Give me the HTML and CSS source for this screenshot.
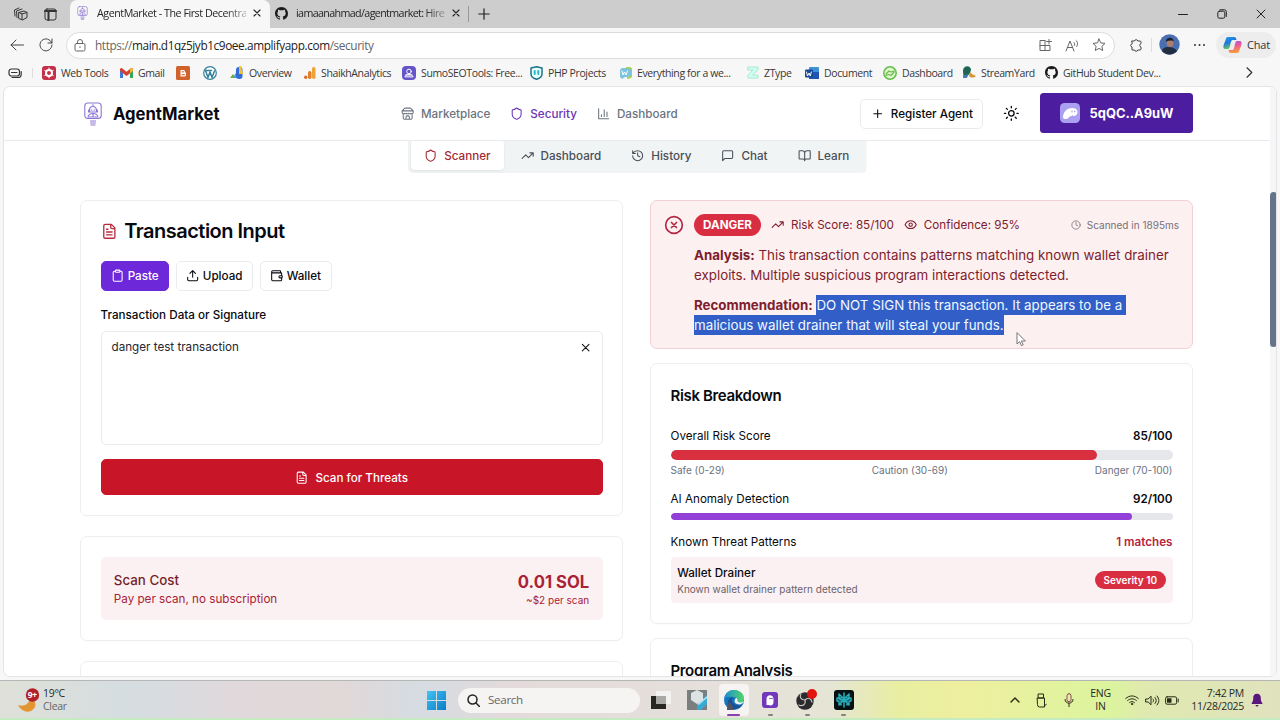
FILE: index.html
```
<!DOCTYPE html>
<html lang="en">

<head>
    <meta charset="UTF-8">
    <meta name="viewport" content="width=device-width, initial-scale=1.0">
    <title>AgentMarket - The First Decentralized Agent Marketplace</title>
    <link rel="stylesheet" href="styles.css">
</head>

<body>

    <!-- Shared icons -->
    <svg class="sprite" xmlns="http://www.w3.org/2000/svg">
        <symbol id="shield" viewBox="0 0 24 24"><path d="M20 13c0 5-3.500 7.500-7.660 8.950a1 1 0 0 1-.67-.01C7.500 20.500 4 18 4 13V6a1 1 0 0 1 1-1c2 0 4.500-1.200 6.240-2.720a1.170 1.170 0 0 1 1.520 0C14.510 3.810 17 5 19 5a1 1 0 0 1 1 1z"/></symbol>
        <symbol id="store" viewBox="0 0 24 24"><path d="m2 7 4.410-4.410A2 2 0 0 1 7.830 2h8.340a2 2 0 0 1 1.420.59L22 7M4 12v8a2 2 0 0 0 2 2h12a2 2 0 0 0 2-2v-8M15 22v-4a2 2 0 0 0-2-2h-2a2 2 0 0 0-2 2v4M2 7h20v3a2 2 0 0 1-2 2 2.700 2.700 0 0 1-2.600-.6 2.700 2.700 0 0 1-3.400 0 2.700 2.700 0 0 1-4 0 2.700 2.700 0 0 1-3.400 0A2.700 2.700 0 0 1 4 12a2 2 0 0 1-2-2z"/></symbol>
        <symbol id="chart" viewBox="0 0 24 24"><path d="M3 3v18h18M18 17V9M13 17V5M8 17v-3"/></symbol>
        <symbol id="plus" viewBox="0 0 24 24"><path d="M5 12h14M12 5v14"/></symbol>
        <symbol id="sun" viewBox="0 0 24 24"><circle cx="12" cy="12" r="4"/><path d="M12 2v2M12 20v2M4.900 4.900l1.400 1.400M17.700 17.700l1.400 1.400M2 12h2M20 12h2M6.300 17.700l-1.400 1.400M19.100 4.900l-1.400 1.400"/></symbol>
        <symbol id="trend" viewBox="0 0 24 24"><path d="M22 7 13.500 15.500 8.500 10.500 2 17M16 7h6v6"/></symbol>
        <symbol id="history" viewBox="0 0 24 24"><path d="M3 12a9 9 0 1 0 9-9 9.750 9.750 0 0 0-6.740 2.740L3 8M3 3v5h5M12 7v5l4 2"/></symbol>
        <symbol id="message" viewBox="0 0 24 24"><path d="M21 15a2 2 0 0 1-2 2H7l-4 4V5a2 2 0 0 1 2-2h14a2 2 0 0 1 2 2z"/></symbol>
        <symbol id="book" viewBox="0 0 24 24"><path d="M12 7v14M3 18a1 1 0 0 1-1-1V4a1 1 0 0 1 1-1h5a4 4 0 0 1 4 4 4 4 0 0 1 4-4h5a1 1 0 0 1 1 1v13a1 1 0 0 1-1 1h-6a3 3 0 0 0-3 3 3 3 0 0 0-3-3z"/></symbol>
        <symbol id="file" viewBox="0 0 24 24"><path d="M15 2H6a2 2 0 0 0-2 2v16a2 2 0 0 0 2 2h12a2 2 0 0 0 2-2V7zM14 2v4a2 2 0 0 0 2 2h4M10 9H8M16 13H8M16 17H8"/></symbol>
        <symbol id="clipboard" viewBox="0 0 24 24"><rect x="8" y="2" width="8" height="4" rx="1"/><path d="M16 4h2a2 2 0 0 1 2 2v14a2 2 0 0 1-2 2H6a2 2 0 0 1-2-2V6a2 2 0 0 1 2-2h2"/></symbol>
        <symbol id="upload" viewBox="0 0 24 24"><path d="M21 15v4a2 2 0 0 1-2 2H5a2 2 0 0 1-2-2v-4M17 8l-5-5-5 5M12 3v12"/></symbol>
        <symbol id="wallet" viewBox="0 0 24 24"><path d="M19 7V4a1 1 0 0 0-1-1H5a2 2 0 0 0 0 4h15a1 1 0 0 1 1 1v4h-3a2 2 0 0 0 0 4h3a1 1 0 0 0 1-1v-2a1 1 0 0 0-1-1M3 5v14a2 2 0 0 0 2 2h15a1 1 0 0 0 1-1v-4"/></symbol>
        <symbol id="x" viewBox="0 0 24 24"><path d="M18 6 6 18M6 6l12 12"/></symbol>
        <symbol id="x-circle" viewBox="0 0 24 24"><circle cx="12" cy="12" r="10"/><path d="m15 9-6 6M9 9l6 6"/></symbol>
        <symbol id="eye" viewBox="0 0 24 24"><path d="M2 12s3.500-7 10-7 10 7 10 7-3.500 7-10 7-10-7-10-7z"/><circle cx="12" cy="12" r="3"/></symbol>
        <symbol id="clock" viewBox="0 0 24 24"><circle cx="12" cy="12" r="10"/><path d="M12 6v6l4 2"/></symbol>
        <symbol id="github" viewBox="0 0 16 16"><path d="M8 0C3.580 0 0 3.580 0 8c0 3.540 2.290 6.530 5.470 7.590.4.07.55-.17.55-.38v-1.490c-2.010.37-2.530-.49-2.690-.94-.09-.23-.48-.94-.82-1.130-.28-.15-.68-.52-.01-.53.63-.01 1.080.58 1.230.82.72 1.210 1.870.87 2.330.66.07-.52.28-.87.51-1.070-1.780-.2-3.640-.89-3.640-3.950 0-.87.31-1.590.82-2.150-.08-.2-.36-1.020.08-2.120 0 0 .67-.21 2.200.82a7.400 7.400 0 0 1 4 0c1.530-1.040 2.200-.82 2.200-.82.44 1.100.16 1.920.08 2.120.51.56.82 1.270.82 2.150 0 3.070-1.870 3.750-3.650 3.950.29.25.54.73.54 1.480v2.200c0 .21.15.46.55.38A8 8 0 0 0 16 8c0-4.420-3.580-8-8-8z"/></symbol>
        <symbol id="robot" viewBox="0 0 18 24"><rect x=".8" y="1" width="16.400" height="15.500" rx="3"/><path d="M9 2.500v2M5.500 8a3.500 3.500 0 0 1 7 0v2h-7zM4.500 8v2M13.500 8v2M7.200 8h.8M10 8h.8M4 15c.5-2.500 2-3.500 5-3.500s4.500 1 5 3.500zM9 12v3M6.500 19h5M6.500 21h5M7 23h4"/></symbol>
    </svg>

    <div class="desktop">

        <!-- Tab strip -->
        <div class="tabstrip">
            <div class="strip-tools">
                <svg width="15" height="15" viewBox="0 0 15 15"><path d="M6 5.500 11 4l3 1.500v5L9.500 13 6 11.500zM4 10.500 3.500 4 9 2M2 9 1.500 3 6 1M6 5.500l3 1.500 5-1.500M9 7v5.500"/></svg>
                <svg width="13" height="13" viewBox="0 0 13 13"><rect x="1" y="1" width="11" height="11" rx="2"/><path d="M1 3h11M4.500 4v8" stroke-width="2"/></svg>
            </div>
            <div class="tab active">
                <svg class="robot" width="11" height="14"><use href="#robot"/></svg>
                <span class="tab-title">AgentMarket - The First Decentra</span>
                <svg class="tab-close" width="12" height="12"><use href="#x"/></svg>
            </div>
            <div class="tab">
                <svg class="solid" width="13" height="13"><use href="#github"/></svg>
                <span class="tab-title">iamaanahmad/agentmarket: Hire</span>
                <svg class="tab-close" width="12" height="12"><use href="#x"/></svg>
            </div>
            <span class="tab-divider"></span>
            <svg class="new-tab" width="18" height="18"><use href="#plus"/></svg>
            <div class="window-buttons">
                <svg width="10" height="10" viewBox="0 0 10 10"><path d="M.5 5.500h9"/></svg>
                <svg width="10" height="10" viewBox="0 0 10 10"><rect x=".8" y="2.200" width="7" height="7" rx="1.500"/><path d="M3 .8h4.500a1.800 1.800 0 0 1 1.800 1.800V7.500"/></svg>
                <svg width="10" height="10" viewBox="0 0 10 10"><path d="m1 1 8 8M9 1 1 9"/></svg>
            </div>
        </div>

        <!-- Address bar -->
        <div class="toolbar">
            <svg width="14" height="12" viewBox="0 0 14 12"><path d="M13.500 6H1M6 1 1 6l5 5"/></svg>
            <svg width="14" height="14" viewBox="0 0 14 14"><path d="M12.700 5A6 6 0 1 0 13 7M13 1v4H9"/></svg>
            <div class="address">
                <svg width="12" height="13" viewBox="0 0 12 13"><rect x="1" y="4.500" width="10" height="7.500" rx="1.500"/><path d="M3.500 4.500V3a2.500 2.500 0 0 1 5 0v1.500M6 7.800v.8"/></svg>
                <span class="url">https://<b>main.d1qz5jyb1c9oee.amplifyapp.com</b>/security</span>
                <svg width="13" height="13" viewBox="0 0 13 13"><path d="M6 1.500H1v10h10v-5H1M6 1.500v10M10 0v5M7.500 2.500h5"/></svg>
                <svg width="14" height="13" viewBox="0 0 14 13"><path d="m1 12 4-10 4 10M2.500 8.500h5M9 3.500c1 .8 1 2 .3 3M11 1.500c2 1.500 2 4 .7 6"/></svg>
                <svg width="14" height="14" viewBox="0 0 14 14"><path d="m7 1 1.800 3.900 4.200.5-3.100 2.900.8 4.200L7 10.400l-3.700 2.100.8-4.200L1 5.400l4.200-.5z"/></svg>
            </div>
            <svg class="puzzle" width="14" height="14" viewBox="0 0 14 14"><path d="M3 3h2.500a1.700 1.700 0 0 1 3.300 0H11a1 1 0 0 1 1 1v1.700a1.700 1.700 0 0 0 0 3.300V11a1 1 0 0 1-1 1H8.800a1.700 1.700 0 0 1-3.300 0H3V9a1.700 1.700 0 0 1 0-3.300z"/></svg>
            <span class="bar-divider"></span>
            <svg class="avatar" width="21" height="21" viewBox="0 0 21 21"><circle cx="10.500" cy="10.500" r="10.200" fill="#496fb0"/><path d="M3 17c1-4 4-4 7-4s6 1 8 4a10 10 0 0 1-15 0z" fill="#222e40"/><ellipse cx="11" cy="8.500" rx="3.400" ry="4.500" fill="#ae7e6c"/><path d="M7.200 8c-1-5 7.500-6 7.500-.5L13 6.500l-4 .2z" fill="#17202e"/></svg>
            <svg class="dots" width="13" height="4" viewBox="0 0 13 4"><circle cx="2" cy="2" r="1"/><circle cx="6.500" cy="2" r="1"/><circle cx="11" cy="2" r="1"/></svg>
            <div class="copilot">
                <svg width="19" height="18" viewBox="0 0 19 18">
                    <defs>
                        <linearGradient id="cpA" x2=".4" y2="1"><stop stop-color="#1aa4ee"/><stop offset=".5" stop-color="#2176dd"/><stop offset="1" stop-color="#6dcb50"/></linearGradient>
                        <linearGradient id="cpB" x2=".2" y2="1"><stop stop-color="#a350e5"/><stop offset=".5" stop-color="#ee5b95"/><stop offset="1" stop-color="#f99b3a"/></linearGradient>
                    </defs>
                    <path d="M5 1h6c2 0 2 1 2.500 3H10C8 4 8 6 7 10s-2 3-4 3C0 13 0 11 1 8l1.500-4C3 2 3.500 1 5 1z" fill="url(#cpA)"/>
                    <path d="M14 17H8c-2 0-2-1-2.500-3H9c2 0 2-2 3-6s2-3 4-3c3 0 3 2 2 5l-1.500 4c-.5 2-1 3-2.500 3z" fill="url(#cpB)"/>
                </svg>
                <span>Chat</span>
            </div>
        </div>

        <!-- Bookmarks -->
        <div class="bookmarks">
            <span class="bm-first"><svg class="line" width="14" height="10" viewBox="0 0 14 10"><rect x="1" y="1" width="10.500" height="7" rx="2.500"/><path d="M3.500 4.500H9M4 9.500h6.500c2 0 2.700-1.500 2.700-3.500V3.500"/></svg></span>
            <span><svg width="14" height="14" viewBox="0 0 14 14"><rect width="14" height="14" rx="3" fill="#c42f4a"/><circle cx="7" cy="7" r="3" fill="none" stroke="#fff" stroke-width="2"/><path d="M7 2v2M7 10v2M2.700 4.500l1.700 1M9.600 8.500l1.700 1M2.700 9.500l1.700-1M9.600 5.500l1.700-1" stroke="#fff"/></svg>Web Tools</span>
            <span><svg width="13" height="10" viewBox="0 0 13 10"><path d="M0 1v9h3V4z" fill="#3f78d8"/><path d="M13 1v9h-3V4z" fill="#38a55a"/><path d="M0 1c1-1.500 2-1 3 0l3.500 2.700L10 1c1-1 2-1.500 3 0v2L6.500 8 0 3z" fill="#d34136"/><path d="M10 1c1-1 2-1.500 3 0v2l-3 2.400z" fill="#eeb72b"/></svg>Gmail</span>
            <span><svg width="14" height="14" viewBox="0 0 14 14"><rect width="14" height="14" rx="1.500" fill="#d2622b"/><path d="M4.500 4h3a1.500 1.500 0 0 1 1.500 1.500V6a1.500 1.500 0 0 1 1 1.500V9a1.500 1.500 0 0 1-1.500 1.500h-4z" fill="#fff"/><path d="M6 5.800h1.500M6 8.700h2.500" stroke="#d2622b"/></svg></span>
            <span><svg width="14" height="14" viewBox="0 0 14 14"><circle cx="7" cy="7" r="6.300" fill="#fff" stroke="#35809d" stroke-width="1.200"/><path d="m2.500 4.500 2.500 7 2-5.500 2 5.500 2.500-6.500M2 4.500h3M5.500 4.500h3" fill="none" stroke="#35809d" stroke-width="1.500"/></svg></span>
            <span><svg width="14" height="13" viewBox="0 0 14 13"><path d="M0 12 3 8l3 4z" fill="#7aa83b"/><path d="M3 12 9 1v11z" fill="#3baac5"/><rect x="6" y="1" width="6.500" height="12" rx="3" fill="#326bd6"/><path d="M9 0h2l2 8H9z" fill="#f5c030"/></svg>Overview</span>
            <span><svg width="12" height="12" viewBox="0 0 12 12"><rect x="8" width="3.500" height="12" rx="1.700" fill="#eda337"/><rect x="4" y="4" width="3.500" height="8" rx="1.700" fill="#e57e2a"/><circle cx="1.700" cy="10.300" r="1.700" fill="#dc6d24"/></svg>ShaikhAnalytics</span>
            <span><svg width="14" height="14" viewBox="0 0 14 14"><rect width="14" height="14" rx="4" fill="#6455c9"/><circle cx="7" cy="5.500" r="2.300" fill="none" stroke="#fff"/><path d="M3 10.500c1-3 7-3 8 0zM3.500 9 10 9" fill="none" stroke="#fff"/></svg>SumoSEOTools: Free...</span>
            <span><svg width="13" height="14" viewBox="0 0 13 14"><path d="M6.500.8 12 2v6c0 3-3 4.500-5.500 5.300C4 12.500 1 11 1 8V2z" fill="#e6ffff" stroke="#20728a" stroke-width="1.500"/><path d="M4.700 5v3M8.300 5v3" stroke="#30b8c4" stroke-width="2"/></svg>PHP Projects</span>
            <span><svg width="13" height="12" viewBox="0 0 13 12"><path d="M4 1h5a4 4 0 0 1 0 9H6l-3 2-2-2V4a3 3 0 0 1 3-3z" fill="#7cc3df"/><path d="M8 .5a5 5 0 0 1 1 10.500" fill="none" stroke="#a7ce50" stroke-width="2"/><path d="m3 4 1 4 1.500-3L7 8l1.500-4" fill="none" stroke="#fff"/></svg>Everything for a we...</span>
            <span><svg width="12" height="13" viewBox="0 0 12 13"><path d="M1 1h10v3l-5.500 5H11v3H1V9l5-5H1z" fill="#d2fff0" stroke="#a6e8d3"/></svg>ZType</span>
            <span><svg width="14" height="12" viewBox="0 0 14 12"><rect x="4" width="10" height="12" rx="1" fill="#3f91d8"/><rect x="4" y="5" width="10" height="7" fill="#2056b2"/><rect y="2.500" width="8" height="8" rx="1" fill="#184997"/><path d="m1.500 5 1 4L4 6l1.300 3 1-4" fill="none" stroke="#fff"/></svg>Document</span>
            <span><svg width="14" height="14" viewBox="0 0 14 14"><circle cx="7" cy="7" r="6.200" fill="#dff8ce" stroke="#68bd4b" stroke-width="1.500"/><path d="m3 8 3-3 2 1 3-1M3 9.500l3-1 2 1L11 6" fill="none" stroke="#68bd4b" stroke-width="1.200"/></svg>Dashboard</span>
            <span><svg width="14" height="13" viewBox="0 0 14 13"><path d="M1 12c1-3 0-4 0-7 0-6 8-6 8-1l-1 3-4 5z" fill="#1d6654"/><path d="M8 6c2 3 5 3 6 4-2 2-5 2-7 0z" fill="#d39738"/><path d="m1 10 5-2-1 4H1z" fill="#4b78bb"/></svg>StreamYard</span>
            <span><svg class="solid" width="13" height="13"><use href="#github"/></svg>GitHub Student Dev...</span>
            <svg class="line more" width="7" height="11" viewBox="0 0 7 11"><path d="m1 .8 4.800 4.700L1 10.200"/></svg>
        </div>

        <!-- Page -->
        <div class="window">
            <div class="page">
                <header class="site-header">
                    <div class="brand">
                        <svg class="robot" width="18" height="24"><use href="#robot"/></svg>
                        <span>AgentMarket</span>
                    </div>
                    <nav class="site-nav">
                        <a><svg class="icon"><use href="#store"/></svg>Marketplace</a>
                        <a class="current"><svg class="icon"><use href="#shield"/></svg>Security</a>
                        <a><svg class="icon"><use href="#chart"/></svg>Dashboard</a>
                    </nav>
                    <div class="header-actions">
                        <button class="btn register"><svg class="icon"><use href="#plus"/></svg>Register Agent</button>
                        <svg class="icon theme"><use href="#sun"/></svg>
                        <button class="wallet-button">
                            <svg width="20" height="20" viewBox="0 0 20 20"><rect width="20" height="20" rx="4.500" fill="#ab9ff2"/><path d="M3 14.500C3 9 7 5 12 5c3.500 0 5.500 1.600 5.500 4 0 2.500-2 4-3.700 4-.8 0-1.300-.5-1.300-1-.8 1.200-1.600 1.400-2.700 1.200C8.800 15 7.500 16 6 16c-2 0-3-.6-3-1.500z" fill="#fff"/><ellipse cx="12" cy="8.400" rx=".7" ry="1" fill="#ab9ff2"/><ellipse cx="14.700" cy="8.400" rx=".7" ry="1" fill="#ab9ff2"/></svg>
                            5qQC..A9uW
                        </button>
                    </div>
                </header>

                <main>
                    <div class="view-tabs">
                        <a class="selected"><svg class="icon"><use href="#shield"/></svg>Scanner</a>
                        <a><svg class="icon"><use href="#trend"/></svg>Dashboard</a>
                        <a><svg class="icon"><use href="#history"/></svg>History</a>
                        <a><svg class="icon"><use href="#message"/></svg>Chat</a>
                        <a><svg class="icon"><use href="#book"/></svg>Learn</a>
                    </div>

                    <div class="columns">
                        <div class="column">
                            <section class="card input-card">
                                <h2><svg class="icon"><use href="#file"/></svg>Transaction Input</h2>
                                <div class="modes">
                                    <button class="btn primary"><svg class="icon"><use href="#clipboard"/></svg>Paste</button>
                                    <button class="btn"><svg class="icon"><use href="#upload"/></svg>Upload</button>
                                    <button class="btn"><svg class="icon"><use href="#wallet"/></svg>Wallet</button>
                                </div>
                                <div class="field-label">Transaction Data or Signature</div>
                                <div class="textarea">
                                    <span>danger test transaction</span>
                                    <svg class="icon"><use href="#x"/></svg>
                                </div>
                                <button class="btn scan"><svg class="icon"><use href="#file"/></svg>Scan for Threats</button>
                            </section>

                            <section class="card cost-card">
                                <div class="cost">
                                    <div>
                                        <div class="cost-title">Scan Cost</div>
                                        <div class="cost-sub">Pay per scan, no subscription</div>
                                    </div>
                                    <div class="cost-right">
                                        <div class="cost-price">0.01 SOL</div>
                                        <div class="cost-usd">~$2 per scan</div>
                                    </div>
                                </div>
                            </section>

                            <section class="card next-card"></section>
                        </div>

                        <div class="column right">
                            <section class="alert">
                                <svg class="alert-icon"><use href="#x-circle"/></svg>
                                <div class="alert-body">
                                    <div class="alert-meta">
                                        <span class="badge danger">DANGER</span>
                                        <span class="meta score"><svg class="icon"><use href="#trend"/></svg>Risk Score: 85/100</span>
                                        <span class="meta"><svg class="icon"><use href="#eye"/></svg>Confidence: 95%</span>
                                        <span class="scanned"><svg class="icon"><use href="#clock"/></svg>Scanned in 1895ms</span>
                                    </div>
                                    <p><strong>Analysis:</strong> This transaction contains patterns matching known wallet drainer<br>exploits. Multiple suspicious program interactions detected.</p>
                                    <p><strong>Recommendation:</strong> <mark>DO NOT SIGN this transaction. It appears to be a&nbsp;<br>malicious wallet drainer that will steal your funds.</mark></p>
                                </div>
                            </section>

                            <section class="card risk-card">
                                <h3>Risk Breakdown</h3>
                                <div class="row">Overall Risk Score<b>85/100</b></div>
                                <div class="bar"><div class="fill red" style="width: 85%"></div></div>
                                <div class="scale"><span>Safe (0-29)</span><span>Caution (30-69)</span><span>Danger (70-100)</span></div>
                                <div class="row">AI Anomaly Detection<b>92/100</b></div>
                                <div class="bar thin"><div class="fill purple" style="width: 92%"></div></div>
                                <div class="row threats">Known Threat Patterns<b>1 matches</b></div>
                                <div class="threat">
                                    <div>
                                        <div class="threat-name">Wallet Drainer</div>
                                        <div class="threat-desc">Known wallet drainer pattern detected</div>
                                    </div>
                                    <span class="badge severity">Severity 10</span>
                                </div>
                            </section>

                            <section class="card program-card">
                                <h3>Program Analysis</h3>
                            </section>
                        </div>
                    </div>
                </main>
            </div>
            <div class="scrollbar"><div class="thumb"></div></div>
            <svg class="cursor" width="10" height="15" viewBox="0 0 10 15"><path d="M1 1v11l2.600-2.400 1.800 4 1.800-.8-1.800-3.800H9z"/></svg>
        </div>

        <!-- Taskbar -->
        <div class="taskbar">
            <div class="weather">
                <svg width="22" height="25" viewBox="0 0 22 25"><path d="M0 17c5 2 11 0 12-7 6 2 7 8 3 11.500C10 26 3 23 0 17z" fill="#e29531"/><circle cx="14.500" cy="7" r="6.700" fill="#b3202a"/><text x="14.300" y="10" text-anchor="middle">9+</text></svg>
                <div>19°C<br><span>Clear</span></div>
            </div>
            <div class="launcher">
                <svg class="start" width="19" height="19" viewBox="0 0 19 19"><defs><linearGradient id="win" x2="1" y2="1"><stop stop-color="#43c3f2"/><stop offset="1" stop-color="#087bc8"/></linearGradient></defs><path d="M0 0h9v9H0zM10 0h9v9h-9zM0 10h9v9H0zM10 10h9v9h-9z" fill="url(#win)"/></svg>
                <div class="search"><svg width="13" height="13" viewBox="0 0 13 13"><circle cx="5.500" cy="5.500" r="4.500"/><path d="m9 9 3.500 3.500"/></svg>Search</div>
                <div class="app first"><svg width="20" height="18" viewBox="0 0 20 18"><rect y="5" width="15" height="13" fill="#292724"/><rect x="5" width="15" height="13" fill="#f3f2f0"/><rect x="5" y="5" width="10" height="8" fill="#aaa9a6"/></svg></div>
                <div class="app"><svg width="20" height="20" viewBox="0 0 20 20"><rect width="20" height="20" fill="#7b7e7e"/><path d="M10 20v-6l10-9v9l-6 6z" fill="#38a9d2"/><path d="m10 14 10-8v2l-8 7z" fill="#a7e0ee"/><path d="m4 3 6-3 6 3v7l-6 4-6-4z" fill="#dce3e4"/></svg></div>
                <div class="app focused"><svg width="20" height="20" viewBox="0 0 20 20"><defs><linearGradient id="edge" x2="1"><stop stop-color="#1c8bd7"/><stop offset="1" stop-color="#51d766"/></linearGradient></defs><circle cx="10" cy="10" r="10" fill="#1576bf"/><path d="M0 9C1 3 5 0 10 0c6 0 10 4 10 8s-3 6-7 5c2-3 0-6-4-6-4-.5-7 0-9 2z" fill="url(#edge)"/><path d="M9 7c-3 5 2 10 9 8-3 5-12 6-14 0-1-4 1-7 5-8z" fill="#1b5096"/><path d="M20 11c-1 3-4 4-7 3-3-1-3-4-1-6 1 0 2 1 1.500 3 1.500 2 4 2 6.500 0z" fill="#f1f4f4"/><path d="M3 20c0-9 5-10 6 0z" fill="#52535f"/></svg><i></i></div>
                <div class="app"><svg width="16" height="16" viewBox="0 0 16 16"><rect width="16" height="16" rx="3" fill="#7138ba"/><path d="M4.500 13V7c0-5 7-5 7 0v3c0 3-2 4-5 3z" fill="#fff"/><circle cx="8" cy="6.500" r=".8" fill="#7138ba"/><circle cx="10" cy="6.500" r=".8" fill="#7138ba"/></svg><i></i></div>
                <div class="app obs"><svg width="22" height="22" viewBox="0 0 22 22"><circle cx="9" cy="12" r="8.700" fill="#2b2a2c"/><g fill="none" stroke="#c7c5c6" stroke-width="1.200"><path d="M9 11c-4 0-6-3-4-6M9 11c3-3 6-2 7 2M9 11c1 4-2 7-6 5"/></g><circle cx="16" cy="5" r="5" fill="#e1140e"/></svg><i></i></div>
                <div class="app"><svg width="20" height="20" viewBox="0 0 20 20"><rect width="20" height="20" rx="3" fill="#071113"/><g fill="none" stroke="#29aeb9" stroke-width="1.500"><path d="M10 3v14M10 9 5 4v5l5 1 5-1V4zM10 10l-5 5v-4H3V8h4M10 10l5 5v-4h2V8h-4M7 10v5M13 10v5"/></g></svg><i></i></div>
            </div>
            <div class="tray">
                <svg width="10" height="6" viewBox="0 0 10 6"><path d="m1 5 4-4 4 4" stroke-width="1.400"/></svg>
                <svg width="11" height="15" viewBox="0 0 11 15"><path d="M2.500 1h5v4h-5zM1.500 5h7v9h-5a2 2 0 0 1-2-2zM8.500 13l2-2"/></svg>
                <svg width="10" height="14" viewBox="0 0 10 14"><rect x="3" y=".7" width="4" height="8" rx="2" stroke="#963e64"/><path d="M1 6.500c0 5 8 5 8 0M5 10.500V14"/></svg>
                <div class="lang">ENG<br>IN</div>
                <svg width="14" height="10" viewBox="0 0 14 10"><path d="M.7 3.500c4-3.500 8.600-3.500 12.600 0M2.600 5.500c3-2.300 5.800-2.300 8.800 0M4.600 7.500c1.500-1.200 3.300-1.200 4.800 0"/><circle cx="7" cy="9" r=".7"/></svg>
                <svg width="15" height="11" viewBox="0 0 15 11"><path d="M1 4h2.200L6 1.200v8.600L3.200 7H1zM8 4c.8 1 .8 2 0 3M10 2.500c1.700 2 1.700 4 0 6M12 1c2.500 3 2.500 6 0 9"/></svg>
                <svg width="14" height="9" viewBox="0 0 14 9"><rect x=".6" y=".8" width="11" height="7.400" rx="1.500"/><path d="M13.200 3v3"/><path d="M2 2.300h4.500v4.400H2z" fill="#252a16" stroke="none"/></svg>
                <div class="clock">7:42 PM<br>11/28/2025</div>
                <svg width="12" height="14" viewBox="0 0 12 14"><path d="M6 .7C3.300.7 2.200 2.500 2.200 5c0 2.500-.4 3.500-1.500 5v1h10.600v-1c-1.100-1.500-1.500-2.500-1.500-5 0-2.500-1.100-4.300-3.800-4.300zM4.500 12a1.500 1.500 0 0 0 3 0z" fill="#59177e" stroke="none"/></svg>
            </div>
        </div>
    </div>

</body>

</html>
```

FILE: styles.css
```
* {
    box-sizing: border-box;
}

body {
    margin: 0;
    font-family: Inter, sans-serif;
    color: #080a10;
    overflow: hidden;
}

h2, h3, p {
    margin: 0;
}

svg {
    flex: none;
    fill: none;
    stroke-linecap: round;
    stroke-linejoin: round;
}

button {
    font-family: inherit;
    margin: 0;
}

.sprite {
    display: none;
}

.icon {
    width: 13.33px;
    height: 13.33px;
    stroke: currentColor;
    stroke-width: 1.9;
}

.robot {
    stroke: #8d76d2;
    stroke-width: 1.1;
}

.desktop {
    width: 1280px;
    height: 720px;
    display: flex;
    flex-direction: column;
    background: #f7f7f7;
}

.tabstrip, .toolbar, .bookmarks, .taskbar {
    font-family: "Open Sans", sans-serif;
    flex: none;
}

/* Tab strip */
.tabstrip {
    height: 28px;
    display: flex;
    align-items: center;
    background: #cdcdcd;
    font-size: 10.7px;
    color: #252525;
}

.strip-tools {
    width: 70px;
    padding-left: 13px;
    display: flex;
    align-items: center;
    gap: 16px;
    stroke: #333;
}

.tab {
    width: 200px;
    height: 28px;
    display: flex;
    align-items: center;
    padding: 0 7px 2px;
}

.tab.active {
    background: #f7f7f7;
    border-radius: 7px 7px 0 0;
}

.solid {
    fill: #1b1b1b;
}

.tab .solid {
    margin-left: -2px;
}

.tab-title {
    width: 149px;
    margin-left: 8px;
    margin-right: 5px;
    white-space: nowrap;
    letter-spacing: -0.62px;
    -webkit-mask-image: linear-gradient(90deg, #000 86%, rgba(0, 0, 0, 0.3));
    mask-image: linear-gradient(90deg, #000 86%, rgba(0, 0, 0, 0.3));
}

.tab.active .tab-title {
    margin-left: 9px;
    letter-spacing: -0.45px;
}

.tab-close {
    stroke: #222;
    stroke-width: 2.2;
}

.tab-divider {
    width: 1px;
    height: 16px;
    background: #999;
    margin-left: -2px;
}

.new-tab {
    stroke: #222;
    stroke-width: 1.6;
    margin-left: 6px;
}

.window-buttons {
    margin-left: auto;
    margin-right: 14px;
    display: flex;
    gap: 29px;
    stroke: #222;
}

/* Address bar */
.toolbar {
    height: 33px;
    display: flex;
    align-items: center;
    padding: 0 5px 0 10px;
    stroke: #444;
}

.toolbar > svg + svg {
    margin-left: 15px;
}

.address {
    width: 1049px;
    height: 27px;
    margin-left: 13px;
    margin-top: 1px;
    display: flex;
    align-items: center;
    flex: none;
    background: #fff;
    border: 1px solid #dcdcdc;
    border-radius: 14px;
    padding: 0 8px 0 7px;
    gap: 13px;
    stroke: #666;
}

.url {
    flex: 1;
    margin-left: -4px;
    font-size: 11.8px;
    letter-spacing: -0.4px;
    color: #666;
}

.url b {
    font-weight: normal;
    color: #222;
}

.puzzle {
    margin-left: 14px;
}

.bar-divider {
    width: 1px;
    height: 14px;
    margin-left: 8px;
    background: #ddd;
}

.toolbar > .avatar {
    margin-left: 7px;
    stroke: none;
}

.toolbar > .dots {
    margin-left: 13px;
    fill: #333;
    stroke: none;
}

.copilot {
    width: 60px;
    height: 26px;
    margin-left: auto;
    display: flex;
    align-items: center;
    gap: 5px;
    padding-left: 7px;
    background: #ededed;
    border-radius: 13px;
    font-size: 11px;
    letter-spacing: -0.2px;
    color: #333;
    stroke: none;
}

.copilot {
    margin-right: -1px;
}

/* Bookmarks */
.bookmarks {
    height: 25px;
    display: grid;
    grid-template-columns: 34px 78px 56px 27px 27px 74px 98px 128px 89px 128px 58px 78px 79px 83px 201px 20px;
    align-items: center;
    padding-left: 8px;
    padding-bottom: 2px;
    font-size: 10.5px;
    letter-spacing: -0.38px;
    color: #383838;
}

.bookmarks span {
    display: flex;
    align-items: center;
    gap: 5px;
    white-space: nowrap;
}

.bookmarks .bm-first {
    width: 25px;
    border-right: 1px solid #ddd;
}

.bookmarks .line {
    stroke: #333;
    stroke-width: 1.2;
}

/* Browser content area */
.window {
    height: 591px;
    flex: none;
    margin: 0 3px;
    display: flex;
    position: relative;
    background: #fff;
    border: 1px solid #e4e4e4;
    border-radius: 7px;
    overflow: hidden;
}

.page {
    width: 1266px;
    height: 589px;
    flex: none;
    overflow: hidden;
}

.scrollbar {
    flex: none;
    width: 7px;
    background: #f4f6f8;
    padding-top: 105px;
}

.thumb {
    height: 155px;
    width: 7px;
    background: #64748b;
    border-radius: 4px;
}

.cursor {
    position: absolute;
    left: 1012px;
    top: 245px;
    fill: #fff;
    stroke: #777;
}

/* Site header */
.site-header {
    height: 54px;
    padding: 0 77px 0 80px;
    display: grid;
    grid-template-columns: 317px 1fr auto;
    align-items: center;
    border-bottom: 1px solid #e8eaee;
}

.brand {
    display: flex;
    align-items: center;
    gap: 11px;
    font-size: 16.67px;
    font-weight: 700;
}

.site-nav {
    display: flex;
    gap: 20px;
    font-size: 11.67px;
    font-weight: 500;
    color: #6b7480;
}

.site-nav a, .view-tabs a {
    display: flex;
    align-items: center;
    gap: 6.67px;
}

.site-nav .current {
    color: #6b35b5;
}

.header-actions {
    display: flex;
    align-items: center;
}

.btn {
    height: 30px;
    display: flex;
    align-items: center;
    justify-content: center;
    gap: 3px;
    padding: 0 10px;
    background: #fff;
    border: 1px solid #e9ecef;
    border-radius: 5px;
    font-size: 11.67px;
    font-weight: 500;
    color: #080a10;
    white-space: nowrap;
}

.register {
    width: 123px;
    gap: 6.67px;
}

.theme {
    width: 16.67px;
    height: 16.67px;
    margin: 0 20px;
}

.wallet-button {
    width: 153px;
    height: 40px;
    margin-top: -1px;
    display: flex;
    align-items: center;
    justify-content: center;
    gap: 10px;
    padding: 0;
    background: #4c1d9f;
    border: 0;
    border-radius: 3.5px;
    color: #fff;
    font-size: 12.9px;
    font-weight: 700;
}

/* Section tabs, partly under the header */
.view-tabs {
    width: 459px;
    height: 36px;
    margin: -4px 0 0 403.5px;
    padding: 3.33px;
    display: flex;
    gap: 3.33px;
    background: #f1f4f5;
    border-radius: 5px;
    font-size: 11.67px;
    font-weight: 500;
    color: #484f57;
    clip-path: inset(4px 0 0 0);
}

.view-tabs a {
    padding: 1px 13.33px 0;
}

.view-tabs .selected {
    background: #fff;
    border-radius: 4px;
    color: #a32a35;
    box-shadow: 0 1px 3px rgba(0, 0, 0, 0.08);
}

.columns {
    display: grid;
    grid-template-columns: 543px 543px;
    gap: 27px;
    margin: 27px 0 0 76px;
}

.column {
    display: flex;
    flex-direction: column;
    gap: 20px;
}

.column.right {
    gap: 14px;
}

.card {
    background: #fff;
    border: 1px solid #eceef1;
    border-radius: 7px;
    padding: 20px 19.5px;
    box-shadow: 0 1px 2px rgba(0, 0, 0, 0.02);
}

/* Transaction input */
.input-card {
    height: 316px;
}

.input-card h2 {
    height: 20px;
    display: flex;
    align-items: center;
    gap: 7px;
    font-size: 20px;
    font-weight: 600;
    letter-spacing: -0.5px;
}

.input-card h2 .icon {
    width: 16.67px;
    height: 16.67px;
    color: #b52c3b;
}

.modes {
    display: flex;
    gap: 6.2px;
    margin-top: 20px;
}

.modes .btn {
    padding: 0 9.8px;
}

.modes .primary {
    background: #6d28d9;
    border-color: #6d28d9;
    color: #fff;
}

.field-label {
    font-size: 11.67px;
    font-weight: 500;
    line-height: 14px;
    margin-top: 17px;
}

.textarea {
    height: 114px;
    margin-top: 9px;
    padding: 8px 9px 8px 10px;
    display: flex;
    justify-content: space-between;
    border: 1px solid #e9ecef;
    border-radius: 5px;
    font-size: 11.67px;
    line-height: 15px;
    color: #252830;
}

.textarea .icon {
    margin-top: 1px;
    color: #111;
}

.input-card .scan {
    width: 100%;
    height: 36px;
    margin-top: 14px;
    padding-top: 1px;
    gap: 7px;
    background: #c91528;
    border-color: #c91528;
    color: #fff;
}

/* Scan cost */
.cost-card {
    height: 105px;
}

.cost {
    height: 63px;
    display: flex;
    align-items: center;
    justify-content: space-between;
    padding: 1px 13.33px 0;
    background: #fcf1f2;
    border-radius: 5px;
    color: #a82336;
}

.cost-title {
    font-size: 13.33px;
    font-weight: 500;
    line-height: 19px;
    color: #741f2b;
}

.cost-sub {
    font-size: 11.67px;
    line-height: 18px;
}

.cost-right {
    text-align: right;
}

.cost-price {
    font-size: 16.67px;
    font-weight: 700;
    line-height: 22px;
}

.cost-usd {
    font-size: 10px;
    line-height: 14px;
}

.next-card {
    height: 60px;
}

/* Verdict */
.alert {
    height: 149px;
    display: flex;
    gap: 10px;
    padding: 13px;
    background: #fcf0f1;
    border: 1px solid #f2ced5;
    border-radius: 7px;
    color: #7f1d2d;
}

.alert-icon {
    width: 20px;
    height: 20px;
    margin-top: 1px;
    stroke: #b22842;
    stroke-width: 2;
}

.alert-body {
    flex: 1;
    font-size: 13.33px;
    line-height: 20px;
    white-space: nowrap;
}

.alert-meta {
    height: 22px;
    display: flex;
    align-items: center;
    margin-bottom: 9px;
    font-size: 11.67px;
}

.badge {
    display: flex;
    align-items: center;
    justify-content: center;
    background: #d92e42;
    border-radius: 11px;
    color: #fff;
    font-weight: 600;
}

.danger {
    width: 67px;
    height: 22px;
    font-size: 11.67px;
    font-weight: 700;
}

.meta {
    display: flex;
    align-items: center;
    gap: 6.67px;
    margin-left: 10px;
}

.scanned {
    display: flex;
    align-items: center;
    gap: 6px;
    margin-left: auto;
    font-size: 10px;
    color: #77717a;
}

.scanned .icon {
    width: 10px;
    height: 10px;
}

.alert p + p {
    margin-top: 10px;
}

mark {
    background: #315fc7;
    color: #f2f8ff;
    padding: 2px 0;
}

/* Risk breakdown */
.risk-card {
    height: 261px;
}

.card h3 {
    font-size: 15px;
    font-weight: 600;
    line-height: 24px;
    letter-spacing: -0.35px;
}

.row {
    height: 16px;
    display: flex;
    align-items: center;
    justify-content: space-between;
    font-size: 11.67px;
}

.row b {
    font-weight: 600;
}

.risk-card h3 + .row {
    margin-top: 20px;
}

.bar {
    height: 10px;
    margin-top: 6px;
    background: #e5e7eb;
    border-radius: 5px;
    overflow: hidden;
}

.bar.thin {
    height: 7px;
}

.fill {
    height: 100%;
    border-radius: 5px;
}

.red {
    background: #d9303f;
}

.purple {
    background: #9340d8;
}

.scale {
    height: 14px;
    display: flex;
    justify-content: space-between;
    align-items: center;
    margin: 3px 0 14px;
    font-size: 10px;
    color: #6b7280;
}

.threats {
    margin-top: 14px;
}

.threats b {
    color: #b8253a;
}

.threat {
    height: 46px;
    margin-top: 7px;
    padding: 0 6.67px;
    display: flex;
    align-items: center;
    justify-content: space-between;
    background: #fcf1f2;
    border-radius: 4px;
}

.threat-name {
    font-size: 11.67px;
    font-weight: 500;
    line-height: 17px;
}

.threat-desc {
    font-size: 10px;
    line-height: 14px;
    color: #6a626b;
}

.severity {
    width: 71px;
    height: 18px;
    font-size: 10px;
}

.program-card {
    height: 80px;
}

/* Taskbar */
.taskbar {
    height: 40px;
    margin-top: 3px;
    display: grid;
    grid-template-columns: 427px 578px 1fr;
    align-items: center;
    padding-top: 1px;
    border-top: 1px solid #b5b7b7;
    border-bottom: 2px solid #c4ecc0;
    background: linear-gradient(90deg, #dfe1d8 0, #d5dde1 130px, #e1d8db 245px, #e1d8d8 340px, #d5dce2 420px, #e4dadb 510px, #e5e0dc 700px, #e5e5d5 830px, #e8eea0 900px, #eeef9f 960px, #dcf49d 1110px, #e0e9b0 1145px, #e0e2bd 1280px);
    font-size: 10.5px;
    line-height: 13.5px;
    letter-spacing: -0.3px;
    color: #262a27;
}

.weather {
    display: flex;
    align-items: center;
    padding-left: 18px;
    gap: 3px;
}

.weather text {
    fill: #fff;
    font-size: 8.5px;
    font-weight: 700;
}

.weather span {
    color: #666;
}

.launcher {
    height: 36px;
    display: flex;
    align-items: center;
}

.search {
    width: 182px;
    height: 25px;
    margin: 0 1px 0 12px;
    padding-left: 9px;
    display: flex;
    align-items: center;
    gap: 8px;
    background: #f6f4f3;
    border-radius: 13px;
    font-size: 11.6px;
    color: #666;
}

.search svg {
    stroke: #222;
    stroke-width: 1.5;
}

.app {
    width: 30px;
    height: 32px;
    margin-right: 6.67px;
    display: flex;
    flex-direction: column;
    justify-content: center;
    align-items: center;
    position: relative;
}

.app.first {
    margin-left: 4.5px;
}

.focused {
    background: #f6f3f2;
    border-radius: 4px;
}

/* Running indicator */
.app i {
    position: absolute;
    bottom: 0;
    width: 5px;
    height: 2.5px;
    border-radius: 2px;
    background: #85817e;
}

.focused i {
    width: 13px;
    background: #8a44ad;
}

.tray {
    display: grid;
    grid-template-columns: 20px 33px 22px 41px 21px 20px 19px 63px 25px;
    align-items: center;
    justify-items: center;
    stroke: #252a16;
}

.lang {
    text-align: center;
}

.clock {
    justify-self: end;
    text-align: right;
}
```
